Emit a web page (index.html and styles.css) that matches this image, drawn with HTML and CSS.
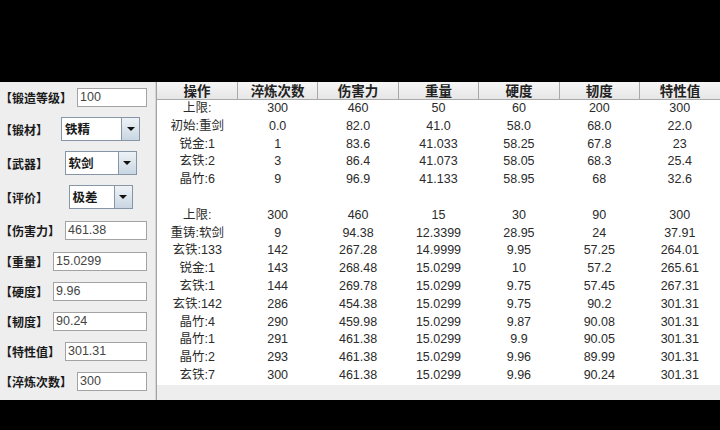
FILE: index.html
```html
<!DOCTYPE html>
<html lang="zh">
<head>
<meta charset="utf-8">
<title>淬炼</title>
<link rel="stylesheet" href="styles.css">
</head>
<body>
<div class="frame">
  <div class="left">
    <div class="row r1"><span class="label">【锻造等级】</span><div class="field f-lvl">100</div></div>
    <div class="row r2"><span class="label">【锻材】</span><div class="combo-cell"><div class="combo c1"><span class="ctext">铁精</span><span class="cbtn"><i class="tri"></i></span></div></div></div>
    <div class="row r3"><span class="label">【武器】</span><div class="combo-cell"><div class="combo c2"><span class="ctext">软剑</span><span class="cbtn"><i class="tri"></i></span></div></div></div>
    <div class="row r4"><span class="label">【评价】</span><div class="combo-cell"><div class="combo c3"><span class="ctext">极差</span><span class="cbtn"><i class="tri"></i></span></div></div></div>
    <div class="row r5"><span class="label">【伤害力】</span><div class="field">461.38</div></div>
    <div class="row r6"><span class="label">【重量】</span><div class="field">15.0299</div></div>
    <div class="row r6"><span class="label">【硬度】</span><div class="field">9.96</div></div>
    <div class="row r6"><span class="label">【韧度】</span><div class="field">90.24</div></div>
    <div class="row r6"><span class="label">【特性值】</span><div class="field">301.31</div></div>
    <div class="row r6"><span class="label">【淬炼次数】</span><div class="field">300</div></div>
  </div>
  <div class="right">
    <table class="grid">
      <thead>
        <tr><th>操作</th><th>淬炼次数</th><th>伤害力</th><th>重量</th><th>硬度</th><th>韧度</th><th>特性值</th></tr>
      </thead>
      <tbody>
        <tr><td>上限:</td><td>300</td><td>460</td><td>50</td><td>60</td><td>200</td><td>300</td></tr>
        <tr><td>初始:重剑</td><td>0.0</td><td>82.0</td><td>41.0</td><td>58.0</td><td>68.0</td><td>22.0</td></tr>
        <tr><td>锐金:1</td><td>1</td><td>83.6</td><td>41.033</td><td>58.25</td><td>67.8</td><td>23</td></tr>
        <tr><td>玄铁:2</td><td>3</td><td>86.4</td><td>41.073</td><td>58.05</td><td>68.3</td><td>25.4</td></tr>
        <tr><td>晶竹:6</td><td>9</td><td>96.9</td><td>41.133</td><td>58.95</td><td>68</td><td>32.6</td></tr>
        <tr><td></td><td></td><td></td><td></td><td></td><td></td><td></td></tr>
        <tr><td>上限:</td><td>300</td><td>460</td><td>15</td><td>30</td><td>90</td><td>300</td></tr>
        <tr><td>重铸:软剑</td><td>9</td><td>94.38</td><td>12.3399</td><td>28.95</td><td>24</td><td>37.91</td></tr>
        <tr><td>玄铁:133</td><td>142</td><td>267.28</td><td>14.9999</td><td>9.95</td><td>57.25</td><td>264.01</td></tr>
        <tr><td>锐金:1</td><td>143</td><td>268.48</td><td>15.0299</td><td>10</td><td>57.2</td><td>265.61</td></tr>
        <tr><td>玄铁:1</td><td>144</td><td>269.78</td><td>15.0299</td><td>9.75</td><td>57.45</td><td>267.31</td></tr>
        <tr><td>玄铁:142</td><td>286</td><td>454.38</td><td>15.0299</td><td>9.75</td><td>90.2</td><td>301.31</td></tr>
        <tr><td>晶竹:4</td><td>290</td><td>459.98</td><td>15.0299</td><td>9.87</td><td>90.08</td><td>301.31</td></tr>
        <tr><td>晶竹:1</td><td>291</td><td>461.38</td><td>15.0299</td><td>9.9</td><td>90.05</td><td>301.31</td></tr>
        <tr><td>晶竹:2</td><td>293</td><td>461.38</td><td>15.0299</td><td>9.96</td><td>89.99</td><td>301.31</td></tr>
        <tr><td>玄铁:7</td><td>300</td><td>461.38</td><td>15.0299</td><td>9.96</td><td>90.24</td><td>301.31</td></tr>
      </tbody>
    </table>
  </div>
</div>
</body>
</html>
```

FILE: styles.css
```css
html, body {
  margin: 0;
  padding: 0;
  background: #000;
  width: 720px;
  height: 430px;
  overflow: hidden;
}

.frame {
  margin-top: 82px;
  height: 318px;
  display: flex;
  background: #eeeeee;
  font-family: "Liberation Sans", "Noto Sans CJK SC", sans-serif;
}

.left {
  width: 155px;
  flex: none;
  display: flex;
  flex-direction: column;
  border-right: 1px solid #d6d6d6;
}

.row {
  display: flex;
  align-items: center;
  padding-left: 0;
}
.r1 { height: 30px; }
.r2, .r3, .r4 { height: 34px; }
.r5 { height: 32px; }
.r6 { height: 30px; }

.label {
  font-family: "Noto Sans CJK SC", sans-serif;
  font-weight: bold;
  font-size: 12px;
  color: #1a1a1a;
  white-space: nowrap;
  flex: none;
}

.field {
  flex: 1;
  height: 17px;
  margin: 0 8px 0 5px;
  border: 1px solid #a3a3a3;
  background: #fff;
  font-size: 12.5px;
  line-height: 17px;
  color: #444;
  padding-left: 2px;
  box-sizing: content-box;
}

.combo-cell {
  flex: 1;
  display: flex;
  justify-content: center;
  padding-right: 2px;
}

.combo {
  display: flex;
  height: 22px;
  border: 1px solid #8796a6;
  background: #fff;
}
.c1 { width: 77px; }
.c2 { width: 70px; }
.c3 { width: 62px; }

.ctext {
  flex: 1;
  font-family: "Noto Sans CJK SC", sans-serif;
  font-weight: bold;
  font-size: 12.5px;
  line-height: 22px;
  padding-left: 3px;
  color: #1a1a1a;
}

.cbtn {
  width: 17px;
  border-left: 1px solid #8796a6;
  background: linear-gradient(#eef2f6, #c9d6e2);
  display: flex;
  align-items: center;
  justify-content: center;
}

.tri {
  width: 0;
  height: 0;
  border-left: 4px solid transparent;
  border-right: 4px solid transparent;
  border-top: 4px solid #111;
}

.right {
  flex: 1;
  border-left: 1px solid #a3a3a3;
  background: #eeeeee;
}

.grid {
  width: 100%;
  table-layout: fixed;
  border-collapse: collapse;
  background: #fff;
}

.grid th {
  height: 17px;
  padding: 0;
  font-family: "Noto Sans CJK SC", sans-serif;
  font-weight: bold;
  font-size: 13.5px;
  line-height: 17px;
  color: #222;
  background: linear-gradient(#f6f6f6, #e6e6e6);
  border-right: 1px solid #a9a9a9;
  border-bottom: 1px solid #a9a9a9;
}
.grid th:last-child { border-right: none; }

.grid td {
  height: 17.8px;
  padding: 0;
  text-align: center;
  font-size: 12.5px;
  line-height: 17.8px;
  color: #2b2b2b;
  white-space: nowrap;
}
```
